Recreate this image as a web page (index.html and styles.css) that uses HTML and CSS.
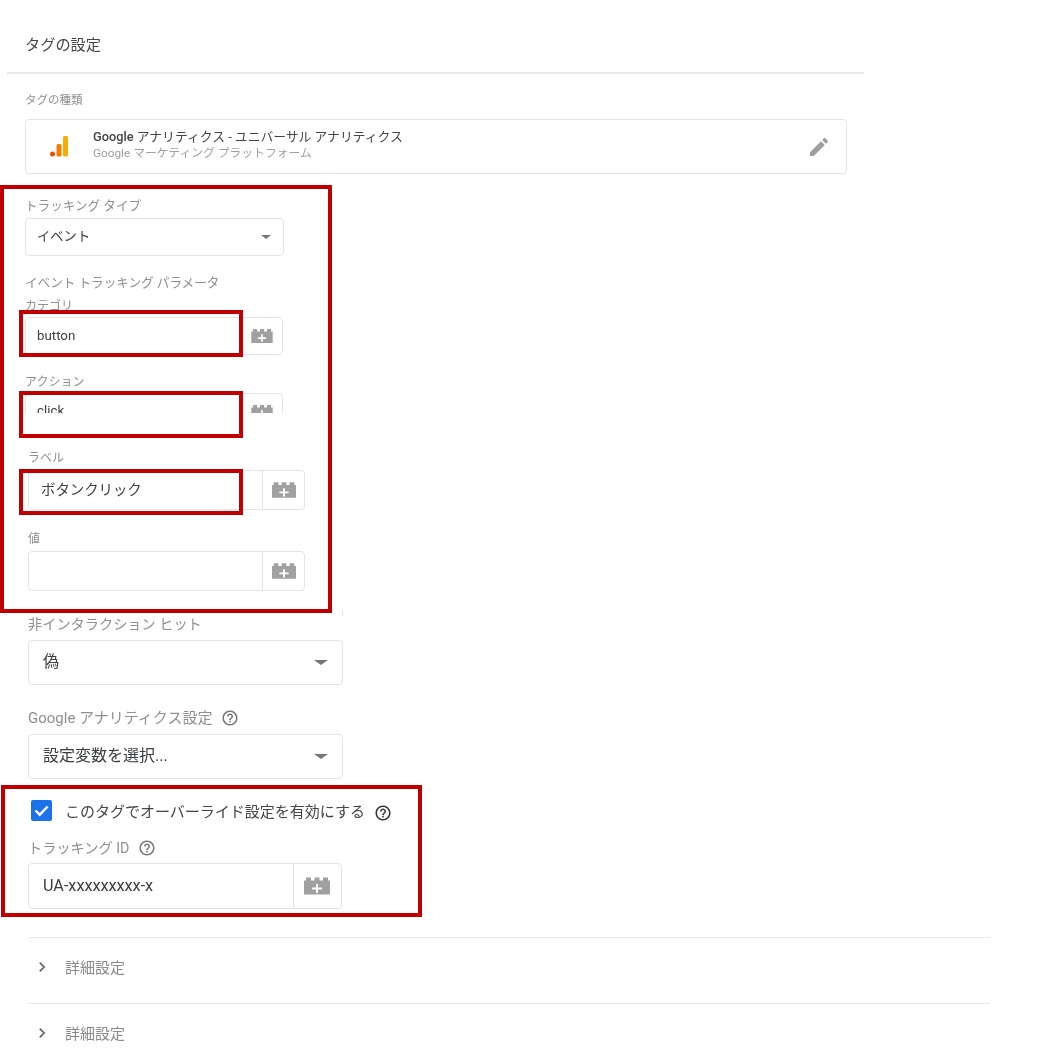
FILE: index.html
```html
<!DOCTYPE html>
<html lang="ja">
<head>
<meta charset="utf-8">
<title>タグの設定</title>
<link rel="stylesheet" href="styles.css">
</head>
<body>
<svg class="defs" width="0" height="0" aria-hidden="true">
  <symbol id="lego" viewBox="0 0 26 17"><path fill-rule="evenodd" d="M2 0h5v3h3.500V0h5v3H19V0h5v3h2v14H0V3h2zM12 6.500V10H8v2h4v3.500h2V12h4v-2h-4V6.500z"/></symbol>
  <symbol id="help" viewBox="0 0 24 24"><path d="M11 18h2v-2h-2v2zm1-16C6.480 2 2 6.480 2 12s4.480 10 10 10 10-4.480 10-10S17.520 2 12 2zm0 18c-4.410 0-8-3.590-8-8s3.590-8 8-8 8 3.590 8 8-3.590 8-8 8zm0-14c-2.210 0-4 1.790-4 4h2c0-1.100.9-2 2-2s2 .9 2 2c0 2-3 1.750-3 5h2c0-2.250 3-2.500 3-5 0-2.210-1.790-4-4-4z"/></symbol>
  <symbol id="chev" viewBox="0 0 24 24"><path d="M8.590 16.590L13.170 12 8.590 7.410 10 6l6 6-6 6z"/></symbol>
</svg>
<main class="page">
  <header class="head"><h1 class="title">タグの設定</h1></header>

  <section class="inset-a">
    <div class="lbl lbl-type">タグの種類</div>
    <div class="card">
      <svg class="ga" viewBox="0 0 18 21" width="18" height="21"><circle cx="2.500" cy="18" r="2.500" fill="#e65100"/><rect x="6.500" y="8" width="5" height="12.500" rx="1.500" fill="#f57c00"/><rect x="13" y="0" width="5" height="20.500" rx="1.500" fill="#f9ab00"/></svg>
      <div class="card-text">
        <div class="card-name"><b>Google</b> アナリティクス - ユニバーサル アナリティクス</div>
        <div class="card-sub">Google マーケティング プラットフォーム</div>
      </div>
      <svg class="pencil" viewBox="0 0 24 24" width="24" height="24"><path d="M3 17.250V21h3.750L17.810 9.940l-3.750-3.750L3 17.250zM20.710 7.040c.39-.39.39-1.020 0-1.410l-2.340-2.340c-.39-.39-1.020-.39-1.410 0l-1.830 1.830 3.750 3.750 1.830-1.830z"/></svg>
    </div>

    <div class="lbl lbl-md lbl-track">トラッキング タイプ</div>
    <div class="select sel-small"><span class="sel-val">イベント</span><i class="caret caret-sm"></i></div>

    <div class="lbl lbl-md lbl-params">イベント トラッキング パラメータ</div>
    <div class="lbl lbl-sm lbl-cat">カテゴリ</div>
    <div class="field f-small"><span class="val">button</span><span class="btn"><svg class="lego lego-sm"><use href="#lego"/></svg></span></div>
    <div class="lbl lbl-sm lbl-act">アクション</div>
    <div class="field f-small f-clip"><span class="val">click</span><span class="btn"><svg class="lego lego-sm"><use href="#lego"/></svg></span></div>
  </section>

  <section class="inset-b">
    <div class="lbl lbl-sm lbl-label">ラベル</div>
    <div class="field f-mid"><span class="val val-jp">ボタンクリック</span><span class="btn btn-line"><svg class="lego lego-md"><use href="#lego"/></svg></span></div>
    <div class="lbl lbl-sm lbl-value">値</div>
    <div class="field f-mid"><span class="val"></span><span class="btn btn-line"><svg class="lego lego-md"><use href="#lego"/></svg></span></div>

    <div class="lbl lbl-lg lbl-non">非インタラクション ヒット</div>
    <div class="select sel-big"><span class="sel-val">偽</span><i class="caret"></i></div>

    <div class="lbl lbl-lg lbl-ga"><span>Google アナリティクス設定</span><svg class="help"><use href="#help"/></svg></div>
    <div class="select sel-big sel-after-ga"><span class="sel-val">設定変数を選択...</span><i class="caret"></i></div>

    <div class="check-row">
      <span class="check"><svg viewBox="0 0 21 21" width="21" height="21"><path d="M4.500 10.500l4.200 4.200 8-8.200" fill="none" stroke="#fff" stroke-width="2.400"/></svg></span>
      <span class="check-text">このタグでオーバーライド設定を有効にする</span>
      <svg class="help help-dark"><use href="#help"/></svg>
    </div>
    <div class="lbl lbl-lg lbl-id"><span>トラッキング ID</span><svg class="help"><use href="#help"/></svg></div>
    <div class="field f-big"><span class="val val-id">UA-xxxxxxxxx-x</span><span class="btn btn-line btn-big"><svg class="lego lego-lg"><use href="#lego"/></svg></span></div>

    <div class="acc acc-first"><svg class="chev"><use href="#chev"/></svg><span>詳細設定</span></div>
    <div class="acc"><svg class="chev"><use href="#chev"/></svg><span>詳細設定</span></div>
  </section>

  <div class="mark m-main"></div>
  <div class="mark m-cat"></div>
  <div class="mark m-act"></div>
  <div class="mark m-label"></div>
  <div class="mark m-over"></div>
  <div class="tick"></div>
</main>
</body>
</html>
```
FILE: styles.css
```css
* { box-sizing: border-box; }
html, body { margin: 0; padding: 0; background: #fff; }
body {
  font-family: Roboto, "Noto Sans CJK JP", sans-serif;
  color: #3c4043;
}
.defs { position: absolute; }
.page { position: relative; width: 1062px; height: 1064px; overflow: hidden; filter: blur(0.35px); }

.head {
  margin-left: 7px;
  width: 857px;
  height: 74px;
  padding: 35px 0 0 18px;
  border-bottom: 2px solid #e8e8e8;
}
.title { margin: 0; font-size: 15.200px; line-height: 20px; font-weight: 400; color: #444; }

.inset-a { margin-left: 25px; }
.inset-b { margin-left: 28px; }

.lbl { color: #8f8f8f; white-space: nowrap; }
.lbl-type { font-size: 11.500px; line-height: 16px; margin-top: 18px; }
.lbl-md { font-size: 12.600px; line-height: 16px; }
.lbl-sm { font-size: 12px; line-height: 14px; }
.lbl-lg { font-size: 14.200px; line-height: 16px; display: flex; align-items: center; }
.lbl-track { margin-top: 24px; }
.lbl-params { margin-top: 19px; }
.lbl-cat { margin-top: 8px; }
.lbl-act { margin-top: 20px; }
.lbl-label { padding-top: 38px; height: 52px; }
.lbl-value { margin-top: 22px; }
.lbl-non { margin-top: 25px; }
.lbl-ga { margin-top: 24px; font-size: 15px; }
.lbl-id { margin-top: 18px; }

.card {
  width: 822px;
  height: 55px;
  margin-top: 11px;
  display: flex;
  align-items: center;
  border: 1px solid #e4e4e4;
  border-radius: 4px;
  padding: 0 15px 0 24px;
}
.ga { flex: none; margin-right: 25px; }
.card-text { flex: 1; padding-bottom: 4px; }
.card-name { font-size: 12.800px; line-height: 16px; color: #444; }
.card-name b { font-weight: 500; }
.card-sub { font-size: 11.800px; line-height: 16px; color: #a0a0a0; }
.pencil { fill: #9e9e9e; flex: none; }

.select, .field {
  display: flex;
  align-items: center;
  background: #fff;
  border: 1px solid #e3e3e8;
  border-radius: 4px;
  color: #3c4043;
}
.select { justify-content: space-between; }
.sel-small { width: 259px; height: 38px; margin-top: 4px; padding: 0 11px; font-size: 13.300px; }
.sel-small .sel-val { padding-bottom: 4px; }
.sel-big { width: 315px; height: 45px; margin-top: 8px; padding: 0 14px; font-size: 16px; }
.sel-big .sel-val { padding-bottom: 5px; }
.sel-after-ga { margin-top: 7px; }

.caret { width: 0; height: 0; border: 5px solid transparent; border-top-color: #777; border-bottom: 0; }
.caret-sm { border-width: 4px 5px 0; margin-right: 1px; }
.sel-big .caret { border-width: 5px 7px 0; margin-right: 0; }

.field { justify-content: space-between; }
.val { flex: 1; font-size: 13.300px; padding: 0 0 2px 11px; }
.btn { display: flex; align-items: center; justify-content: center; height: 100%; flex: none; }
.btn-line { border-left: 1px solid #e3e3e8; }
.f-small { width: 258px; height: 38px; margin-top: 4px; }
.f-small .btn { width: 41px; }
.f-clip {
  height: 20px;
  border-bottom: 0;
  border-radius: 4px 4px 0 0;
  overflow: hidden;
  align-items: flex-start;
}
.f-clip .val { line-height: 16px; padding-top: 9px; }
.f-clip .btn { height: auto; padding-top: 11px; }
.f-mid { width: 277px; height: 40px; margin-top: 5px; }
.f-mid .btn { width: 42px; }
.val-jp { font-size: 14.400px; padding: 0 0 4px 12px; }
.f-big { width: 314px; height: 46px; margin-top: 6px; }
.btn-big { width: 48px; padding-right: 1px; }
.val-id { font-size: 16.200px; padding: 0 0 1px 14px; }

.lego { display: block; fill: #a0a0a0; }
.lego-sm { width: 22px; height: 14px; }
.lego-md { width: 24px; height: 16px; }
.lego-lg { width: 26px; height: 18px; }

.help { width: 18px; height: 18px; fill: #757575; flex: none; margin-left: 9px; }
.help-dark { fill: #333; margin-top: 6px; }

.check-row { display: flex; align-items: center; height: 22px; margin: 20px 0 0 3px; }
.check { width: 21px; height: 21px; border-radius: 2px; background: #1a73e8; flex: none; }
.check svg { display: block; }
.check-text { margin: 3px 0 0 13px; font-size: 15px; line-height: 20px; color: #444; white-space: nowrap; }

.acc {
  width: 962px;
  height: 66px;
  padding: 20px 0 0 4px;
  display: flex;
  align-items: flex-start;
  border-top: 1px solid #e8e8e8;
  font-size: 15px;
  line-height: 20px;
  color: #8a8a8a;
}
.acc-first { margin-top: 28px; }
.chev { width: 20px; height: 20px; fill: #666; flex: none; margin-right: 13px; margin-top: -1px; }

.mark { position: absolute; border: 4px solid #c00000; pointer-events: none; }
.m-main { left: 0; top: 185px; width: 332px; height: 428px; }
.m-cat { left: 19px; top: 310px; width: 224px; height: 47px; }
.m-act { left: 19px; top: 391px; width: 224px; height: 47px; }
.m-label { left: 19px; top: 469px; width: 224px; height: 46px; }
.m-over { left: 1px; top: 785px; width: 421px; height: 132px; }
.tick { position: absolute; left: 342px; top: 610px; width: 1px; height: 6px; background: #e3e3e8; }
```
